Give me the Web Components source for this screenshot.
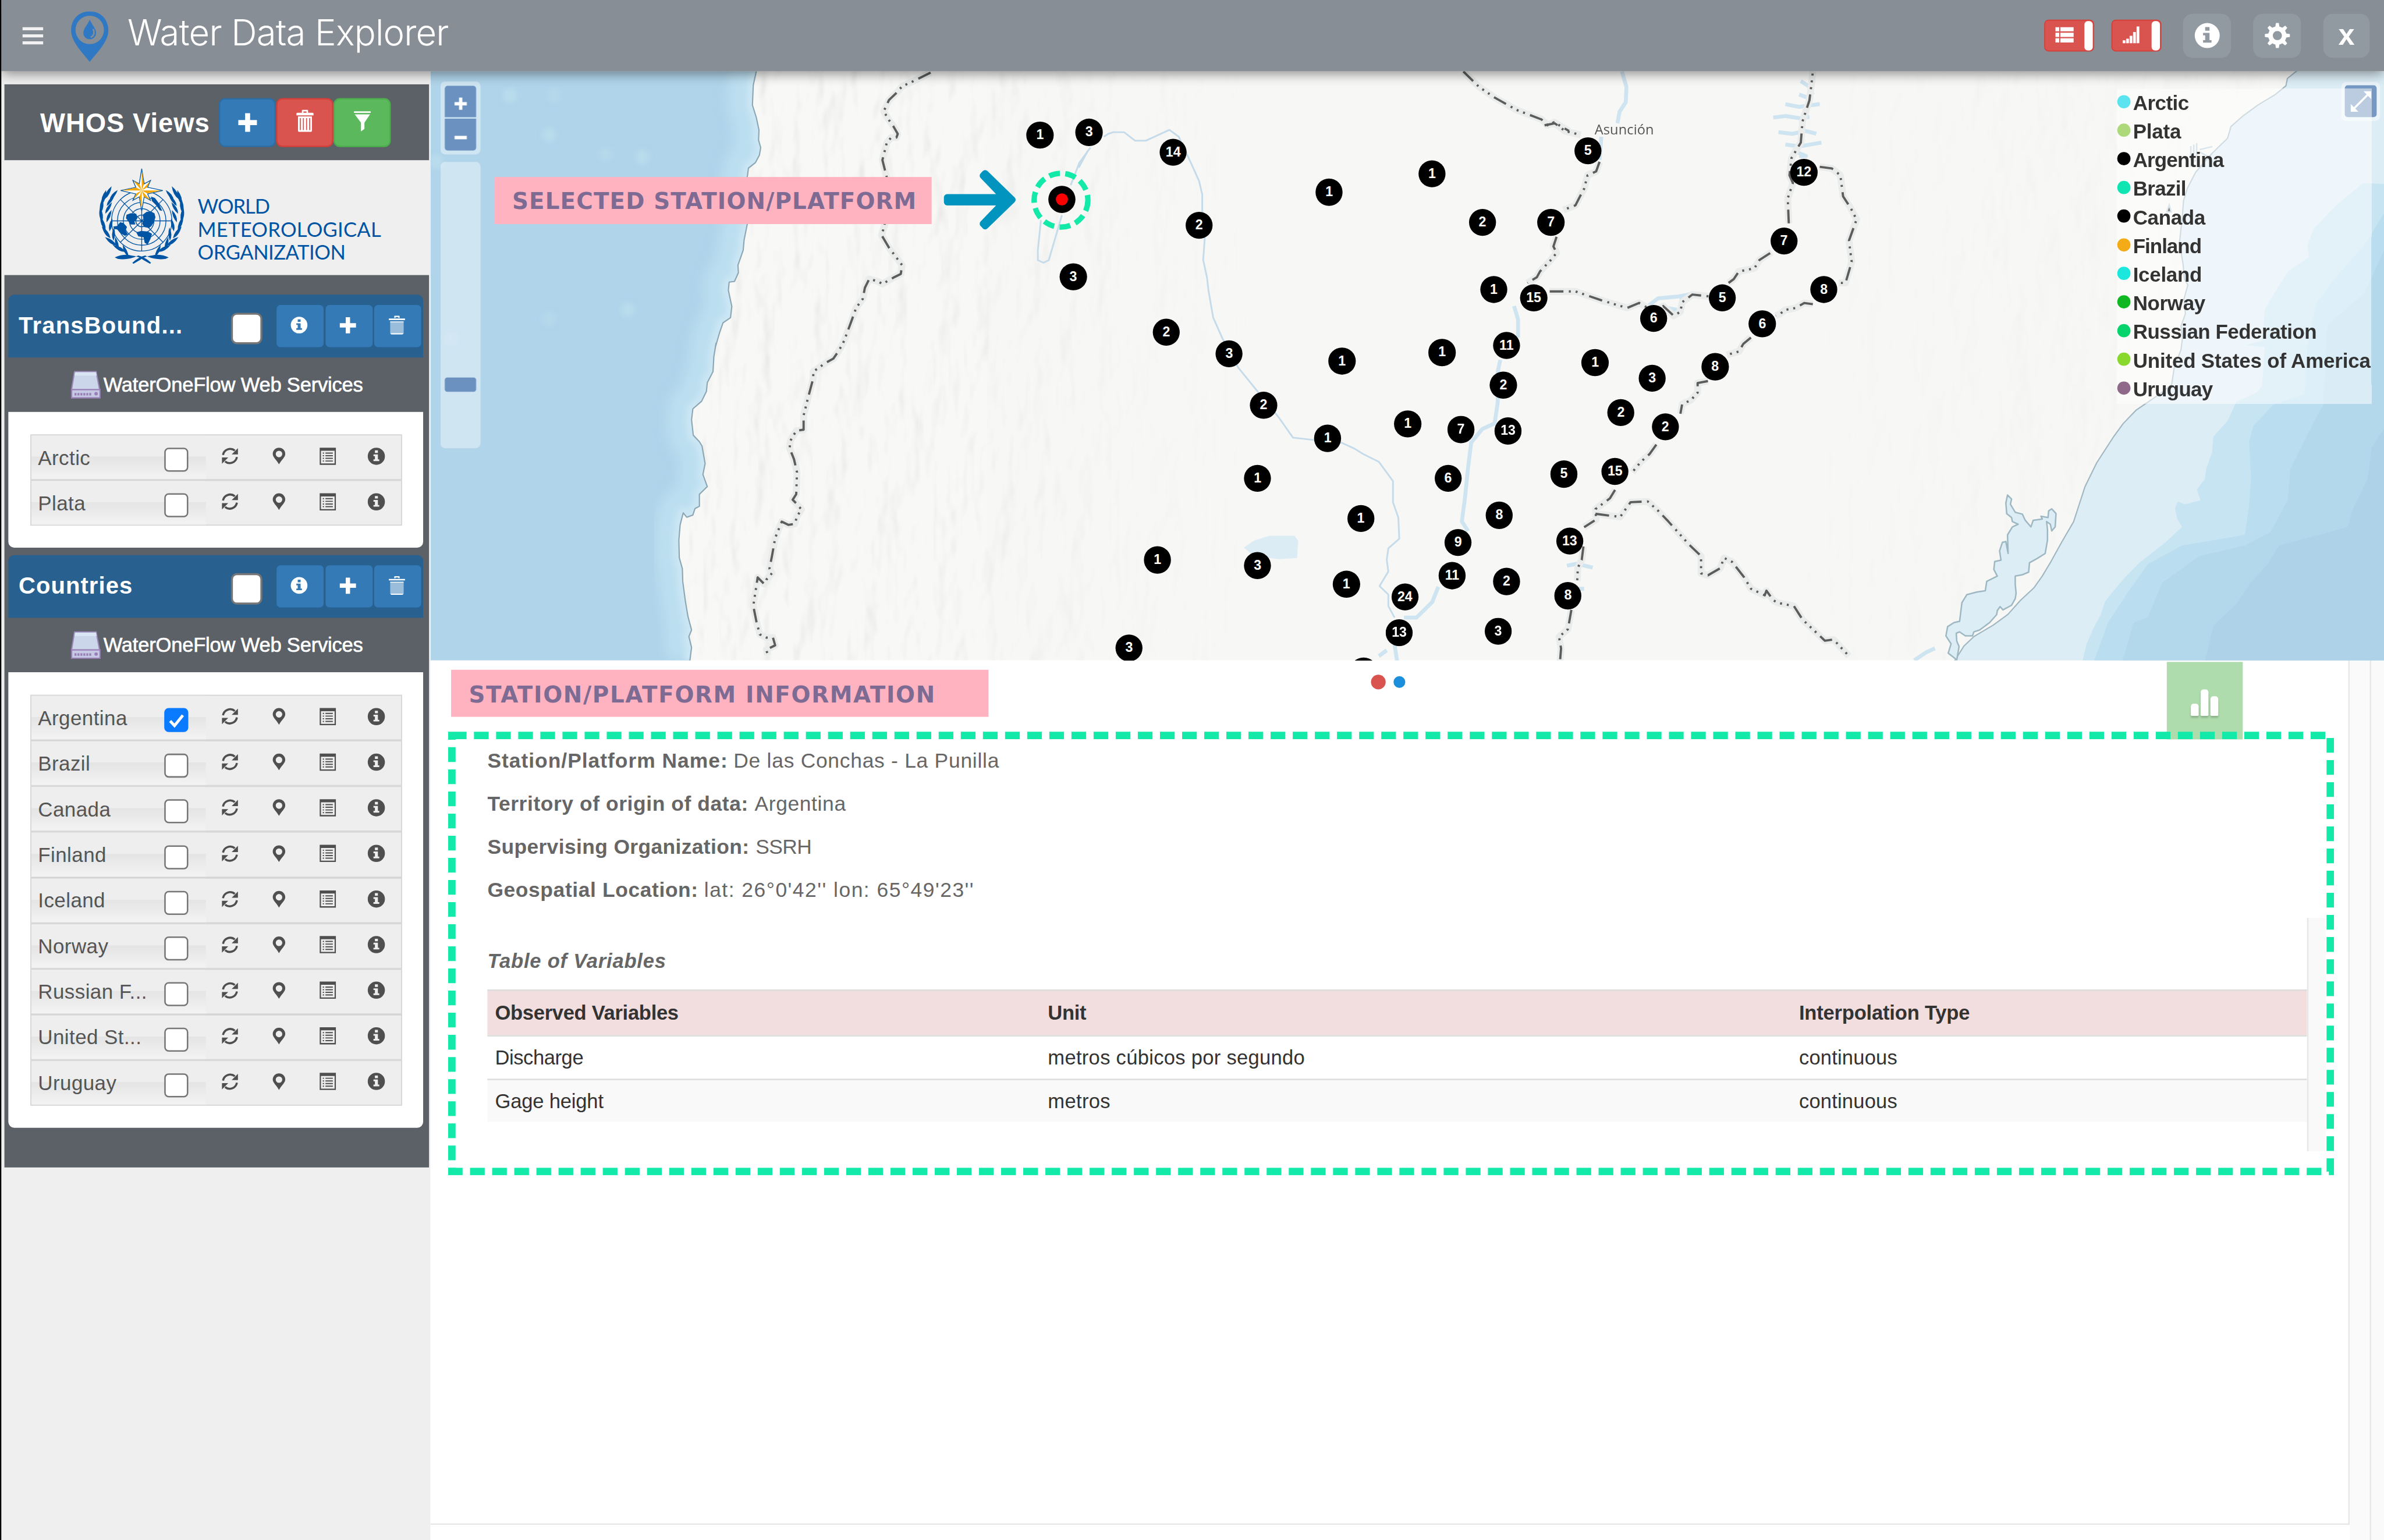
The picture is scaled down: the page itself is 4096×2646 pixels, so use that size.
<!DOCTYPE html>
<html lang="en">
<head>
<meta charset="utf-8">
<title>Water Data Explorer</title>
<style>
html,body{margin:0;padding:0;width:4096px;height:2646px;overflow:hidden;background:#fff}
</style>
</head>
<body>
<water-explorer></water-explorer>
<script>
const define = (name, html, setup) => customElements.define(name, class extends HTMLElement {
  constructor(){ super(); this.attachShadow({mode:'open'}); }
  connectedCallback(){
    if (this.done) return; this.done = true;
    this.shadowRoot.innerHTML = typeof html === 'function' ? html(this) : html;
    if (setup) setup(this);
  }
});

/* Text run whose tracking is adjusted so it spans the width in its w attribute. */
define('fit-text', `<style>:host{display:inline-block;white-space:nowrap;flex:none;width:max-content;justify-self:start}</style><slot></slot>`, el => {
  const w = +el.getAttribute('w'), n = el.textContent.length;
  el.style.letterSpacing = ((w - el.offsetWidth) / (n - 1)).toFixed(3) + 'px';
  el.style.width = w + 'px';
});

const teeth = Array.from({length:8},(_,i)=>`<path d="M9.9 4.5 10.6 0h2.8l.7 4.5z" transform="rotate(${i*45} 12 12)"/>`).join('');
const icons = {
  info:`<path fill-rule="evenodd" d="M12 0a12 12 0 1 1 0 24a12 12 0 0 1 0-24zM10 3.8h4.2v3.6H10zM8 9.4h6.2v7h1.9v2.4H8v-2.4h2v-4.6H8z"/>`,
  plus:`<path d="M8.800 0h6.400v8.800H24v6.400h-8.800V24H8.800v-8.800H0V8.800h8.800z"/>`,
  trash:`<path d="M8 3.2V.8Q8 0 9 0h6q1 0 1 .8v2.4h6q1 0 1 1V6H1V4.200q0-1 1-1zm2 0h4V1.800h-4z" fill-rule="evenodd"/><path d="M3 7.200h18v15q0 1.800-1.800 1.800H4.800Q3 24 3 22.200zM5.300 9v13h1.300V9zM9.300 9v13h1.300V9zM13.400 9v13h1.300V9zM17.400 9v13h1.300V9z" fill-rule="evenodd"/>`,
  bin:`<path d="M8 2.800V.8Q8 0 9 0h6q1 0 1 .8v2.000h-2V1.700h-4v1.100zM0 3.600h24v2H0z"/><path d="M2 8h20v14.200q0 1.800-1.800 1.800H3.800Q2 24 2 22.200z" opacity=".5"/><path d="M2 7.200h20v1.200H2zM2.500 22.500h19l-1.300 1.500H3.800z"/>`,
  filter:`<path d="M0 0h24v2H0zM1 3.600h22l-8 10V21l-5 3V13.600z"/>`,
  refresh:`<path d="M2 10.500A10.500 10.500 0 0 1 19 4.200" fill="none" stroke="currentColor" stroke-width="3"/><path d="M23.500.8v9h-9z"/><path d="M22 13.500A10.500 10.500 0 0 1 5 19.800" fill="none" stroke="currentColor" stroke-width="3"/><path d="M.5 23.200v-9h9z"/>`,
  pin:`<path fill-rule="evenodd" d="M12 0a9 9 0 0 1 9 9c0 4.600-5 8-9 15C8 17 3 13.600 3 9a9 9 0 0 1 9-9zm0 4.400a4.700 4.700 0 1 0 0 9.400a4.700 4.700 0 0 0 0-9.400z"/>`,
  list:`<path fill-rule="evenodd" d="M0 0h24v24H0zM1.900 4.400v17.700h20.200V4.400z"/><path d="M4.500 6.800h2v1.600h-2zM4.500 10.500h2v1.600h-2zM4.500 14.200h2v1.600h-2zM4.500 17.900h2v1.600h-2zM8.500 6.800h11v1.600h-11zM8.500 10.500h11v1.600h-11zM8.500 14.200h11v1.600h-11zM8.500 17.900h11v1.600h-11z"/>`,
  gear:`<circle cx="12" cy="12" r="6.600" fill="none" stroke="currentColor" stroke-width="4.400"/>${teeth}`,
  rows:`<path d="M0 1h5v6H0zM6.500 1H24v6H6.500zM0 9h5v6H0zM6.500 9H24v6H6.500zM0 17h5v6H0zM6.500 17H24v6H6.500z"/>`,
  signal:`<path d="M0 20h4v4H0zM5 17.500h4V24H5zM10 13.500h4V24h-4zM15 8h4v16h-4zM20 0h4v24h-4z"/>`,
  bars:`<path d="M0 3h24v3.800H0zM0 12.200h24V16H0zM0 21.200h24V25H0z" transform="translate(0 -2)"/>`,
  check:`<path d="M5 12.500 10 17.800 19.500 6" fill="none" stroke="currentColor" stroke-width="3.200"/>`,
  expand:`<path d="M5 19 19 5" stroke="currentColor" stroke-width="2" fill="none"/><path d="M22 2v7.500L14.500 2zM2 22v-7.500L9.500 22z"/>`
};
define('ui-icon', el => `<style>:host{display:inline-flex;flex:none;width:${el.getAttribute('w')}px;height:${el.getAttribute('h')||el.getAttribute('w')}px}svg{width:100%;height:100%;fill:currentColor;overflow:visible}</style>
<svg viewBox="0 0 24 24" preserveAspectRatio="none">${icons[el.getAttribute('name')]}</svg>`);

define('check-box', el => { const big = el.hasAttribute('big'), on = el.hasAttribute('checked');
  return `<style>:host{display:block;box-sizing:border-box;flex:none;width:${big?64:49}px;height:${big?64:49}px;border:${big?4:3}px solid ${on?'#0a7aff':'#767676'};border-radius:${big?12:9}px;background:${on?'#0a7aff':'#fff'};color:#fff}</style>${on?'<ui-icon name="check" w="43"></ui-icon>':''}`;});

/* ---------- top bar ---------- */
define('toggle-pill', `<style>:host{display:flex;align-items:center;justify-content:space-between;box-sizing:border-box;width:102px;height:65px;border:2px solid #d43f3a;border-radius:9px;background:#d9534f;color:#fff;padding:0 1px 3px 21px}
i{width:17px;height:60px;margin-top:3px;border-radius:7px;background:#fff}</style><slot></slot><i></i>`);
define('bar-button', `<style>:host{display:flex;align-items:center;justify-content:center;width:98px;height:90px;border-radius:20px;background:#9199a1;color:#fff;font:bold 60px/60px "Liberation Sans",sans-serif}</style><slot></slot>`);
define('top-bar', `<style>
:host{display:flex;align-items:center;height:145px;background:#878e95;color:#fff;padding-left:43px;padding-right:29px;position:relative;z-index:3;box-shadow:0 6px 24px rgba(0,0,0,.45);flex:none}
.menu{color:#f2f2f2}.pin{width:78px;height:103px;margin:3px 0 0 56px}
.title{margin:0 0 11px 38px;font:300 73px/80px "Inter","Liberation Sans",sans-serif}
.sp{flex:1}toggle-pill{margin-right:35px}bar-button{margin-left:45px}
</style>
<ui-icon class="menu" name="bars" w="42" h="38"></ui-icon>
<svg class="pin" viewBox="0 0 78 103"><path fill="#2f78c3" fill-rule="evenodd" d="M39 0C62 0 77 17 77 39C77 62 54 84 39 103C24 84 1 62 1 39C1 17 16 0 39 0zM39 9a29 29 0 1 0 0 58a29 29 0 0 0 0-58z"/><path fill="#2f78c3" d="M39 17c4 10 13 18 13 27a13 13 0 0 1-26 0c0-9 9-17 13-27z"/><path d="M46 36q5 12-5 17" stroke="#878e95" stroke-width="3" fill="none"/></svg>
<fit-text class="title" w="656">Water Data Explorer</fit-text>
<span class="sp"></span>
<toggle-pill><ui-icon name="rows" w="37" h="34"></ui-icon></toggle-pill>
<toggle-pill style="margin-right:-1px"><ui-icon name="signal" w="34" h="34"></ui-icon></toggle-pill>
<bar-button><ui-icon name="info" w="51"></ui-icon></bar-button>
<bar-button><ui-icon name="gear" w="51"></ui-icon></bar-button>
<bar-button style="width:95px"><span style="padding-bottom:4px">x</span></bar-button>`);

/* ---------- sidebar ---------- */
define('color-button', el => `<style>:host{display:flex;align-items:center;justify-content:center;box-sizing:border-box;width:117px;height:100px;border-radius:13px;border:3px solid ${el.getAttribute('line')};background:${el.getAttribute('bg')};color:#fff}</style><slot></slot>`);

const leaves = () => { let s='';
  const L=[[249,506,-68],[232,492,-60],[222,474,-42],[215,456,-28],[211,438,-14],[212,420,0],[216,403,10],[224,394,22]];
  const R=[[262,512,-30],[244,497,-20],[237,478,-2],[231,459,8],[227,441,18],[226,424,26],[230,409,32],[236,398,34]];
  L.forEach(([x,y,a])=>{ s+=`<path d="M0 13Q-8 2 -1-17Q6 0 0 13z" transform="translate(${x-4} ${y}) rotate(${a+8})"/>`; });
  R.forEach(([x,y,a])=>{ s+=`<path d="M0 12Q-6 0 2-15Q6 0 0 12z" transform="translate(${x-6} ${y}) rotate(${a})"/>`; });
  return s+'<path d="M234 524Q252 516 268 520Q284 522 292 529L306 537L308 535Q296 523 282 520Q262 530 240 527z"/>';};
define('wmo-logo', () => `<style>:host{display:flex;height:234px;flex:none;background:#efefef;color:#0054a4}
svg{width:190px;height:204px;margin:12px 0 0 186px;flex:none}
div{display:flex;flex-direction:column;align-items:flex-start;margin:70px 0 0 18px;font:41px/47px "Lato",sans-serif}</style>
<svg viewBox="195 338 190 204"><g fill="#0054a4">${leaves()}<g transform="matrix(-1 0 0 1 578 0)">${leaves()}</g></g>
<g fill="none" stroke="#0054a4" stroke-width="1.600"><circle cx="289" cy="449.500" r="61.500"/><circle cx="289" cy="449.500" r="49.500"/><circle cx="289" cy="449.500" r="37.500"/><circle cx="289" cy="449.500" r="25"/><circle cx="289" cy="449.500" r="12"/>
<path d="M227.500 449.500h123M289 388v123M245.500 406l87 87M332.500 406l-87 87"/></g>
<g fill="#0054a4"><path d="M258 437l8-3 12 1 2 10-6 5 2 7-10 0-6-9-3-4zM231 461l8-1 6-8 7 2 7 8-3 7 5 8-6 3-10-6-6-7-6-1zM291 437l8-6 8-1 8 4 2 8-3 10-5 8-5 4-10-2-4-7 3-7zM278 473l10-3 13 1 9 5-3 10-6 12-6-4-2-11-11-2zM308 400l8 3 6 8 5 10 4 8-5-1-8-11-8-8z"/></g>
<path fill="#fff" stroke="#0054a4" stroke-width="1.600" d="M289 343l5 31 13-7-6 14 31 6.500-31 7 6 13-13-7-5 29-5-29-13 7 6-13-31-7 31-6.500-6-14 13 7z"/>
<path fill="#f7a600" d="M289 344.500v43l4.600-13zM289 387.500l17-19.500-6.500 13.500zM289 387.500h41l-30 6zM289 387.500l17 19-13-6.500zM289 387.500v38l-4.600-25zM289 387.500l-17 19 6.500-13zM289 387.500h-41l30-6zM289 387.500l-17-19.500 12.500 6.500z"/></svg>
<div><fit-text w="148">WORLD</fit-text><fit-text w="374">METEOROLOGICAL</fit-text><fit-text w="302">ORGANIZATION</fit-text></div>`);

define('station-row', el => `<style>:host{display:grid;grid-template-columns:356px 100px 100px 99px 1fr;box-sizing:border-box;height:93.100px;border:2px solid #d4d4d4;background:#eee;color:#4f4f4f}
.n{display:flex;align-items:center;padding:2px 0 0 14px;box-sizing:border-box;background:linear-gradient(#eee 48%,#e4e4e4 49%,#f2f2f2 95%);font:41.500px/60px "Liberation Sans",sans-serif;color:#555}
.n span{flex:none;width:257px;white-space:nowrap;letter-spacing:.5px}check-box{margin-top:8px}
.c{display:flex;align-items:center;justify-content:center;padding-bottom:5px;padding-right:1px}</style>
<div class="n"><span>${el.getAttribute('name')}</span><check-box ${el.hasAttribute('on')?'checked':''}></check-box></div>
<div class="c"><ui-icon name="refresh" w="34"></ui-icon></div><div class="c"><ui-icon name="pin" w="34"></ui-icon></div><div class="c"><ui-icon name="list" w="33" h="35"></ui-icon></div><div class="c"><ui-icon name="info" w="35"></ui-icon></div>`);

define('view-group', el => `<style>:host{display:block;width:846px;flex:none}
header{display:flex;align-items:center;height:128px;background:#28608f;border-radius:12px 12px 0 0;color:#fff;padding-left:21px;box-sizing:border-box}
.t{width:433px;font:bold 47.500px/60px "Liberation Sans",sans-serif;white-space:nowrap;margin-bottom:3px}
check-box{margin:9px 29px 0 0}
.b{display:flex;align-items:center;justify-content:center;width:96px;height:86px;background:#337ab7;border-radius:8px;margin-right:3.500px;padding:0 4px 4px 0;box-sizing:border-box}
.s{display:flex;align-items:center;height:111px;padding-left:127px;color:#fff;font:41px/60px "Liberation Sans",sans-serif;-webkit-text-stroke:.8px #fff}
.s svg{width:62px;height:58px;margin-right:5px}
.l{background:#fff;border-radius:0 0 12px 12px;padding:46px 43.500px 45px 44.500px}
</style><header><div class="t"><fit-text w="${el.getAttribute('w')}">${el.getAttribute('title-text')}</fit-text></div><check-box big></check-box>
<div class="b"><ui-icon name="info" w="34"></ui-icon></div><div class="b"><ui-icon name="plus" w="33"></ui-icon></div><div class="b"><ui-icon name="bin" w="33" h="38"></ui-icon></div></header>
<div class="s"><svg viewBox="0 0 62 58"><path d="M8 2h44l7 36v17H2V38z" fill="#cbd6ea" stroke="#9a86b8" stroke-width="2.500"/><path d="M9 3h43l1 7H8z" fill="#dbe6f4"/><path d="M2 38.500h58v17H2z" fill="#c5c9e4" stroke="#9a7fb5" stroke-width="2.500"/><path d="M8 48h36" stroke="#9a7fb5" stroke-width="5" stroke-dasharray="4 2"/><circle cx="52" cy="47" r="3.500" fill="#9a7fb5"/></svg><fit-text w="529">WaterOneFlow Web Services</fit-text></div>
<div class="l"><slot></slot></div>`);

define('side-bar', `<style>:host{display:flex;flex-direction:column;flex:none;background:#efefef;padding:27px 3px 0 6px;height:2996px;box-sizing:border-box;width:875px}
.h{display:flex;align-items:center;height:155px;background:#5b6167;color:#fff;padding-left:73px;box-sizing:border-box;flex:none}
.h .n{font:bold 54px/70px "Liberation Sans",sans-serif;margin-right:19px}
.g{background:#5b6167;padding:40px 0 81px 8px;display:flex;flex-direction:column;gap:15px}</style>
<div class="h"><fit-text class="n" w="345">WHOS Views</fit-text><color-button bg="#337ab7" line="#2e6da4"><ui-icon name="plus" w="38"></ui-icon></color-button><color-button bg="#d9534f" line="#d43f3a"><ui-icon name="trash" w="38" h="45" style="margin-bottom:6px"></ui-icon></color-button><color-button bg="#5cb85c" line="#4cae4c"><ui-icon name="filter" w="34" h="41" style="margin-bottom:4px"></ui-icon></color-button></div>
<wmo-logo></wmo-logo>
<div class="g">
<view-group title-text="TransBound..." w="334"><station-row name="Arctic"></station-row><station-row name="Plata"></station-row></view-group>
<view-group title-text="Countries" w="232"><station-row name="Argentina" on></station-row><station-row name="Brazil"></station-row><station-row name="Canada"></station-row><station-row name="Finland"></station-row><station-row name="Iceland"></station-row><station-row name="Norway"></station-row><station-row name="Russian F..."></station-row><station-row name="United St..."></station-row><station-row name="Uruguay"></station-row></view-group>
</div>`);

/* ---------- map ---------- */
/* Each survey frame has its own origin and scale; points are projected to page units. */
const frame = (ox,oy,sx,sy) => s => s.trim().split(/\s+/).map(p=>{const [x,y]=p.split(',').map(Number);return (ox+x/sx).toFixed(1)+','+(oy+y/sy).toFixed(1)}).join(' ');
const A=frame(880,0,1.12,1.96), B=frame(880,700,1.12,2.24), C=frame(2200,130,1.568,1.2748), D=frame(3150,130,1.4255,1.2748), E=frame(3950,500,1.7193,1.8447);
const wc = A('742,285 735,340 733,420 742,470 748,520 747,560 752,590 749,620 740,650 724,672 722,700 715,760 722,890 714,960 712,1000 700,1060 701,1090 692,1125 680,1128 678,1160 686,1225 683,1270 666,1290 658,1330 648,1390')+' '+
 B('650,0 645,60 643,130 630,180 628,220 617,265 597,300 594,350 598,420 612,450 618,470 625,550 620,600 630,655 612,690 612,745 602,755 597,785 583,795 575,775 568,830 565,900 566,980 573,1030 574,1090 580,1180 586,1250 594,1310 588,1340 594,1390 590,1452');
const ec = '4690,140 4665,160 4662,175 4640,193 4605,214 4575,236 4550,258 4543,282 4511,313 4478,351 4461,384 4453,410 4451,439 4445,494 4449,520 4452,537 4455,570 4462,581 4454,610 4457,640 4448,665 4451,690 4448,713 4434,751 4429,784 4405,803 4385,817 4357,836 4330,864 4311,890 4276,944 4252,993 4240,1030 4229,1064 4205,1105 4183,1145 4165,1175 4148,1199 4120,1225 4095,1253 4065,1275 4026,1298 4005,1318 3985,1350';
const borders = [
 A('1140,290 1100,325 1075,345 1060,375 1045,400 1033,445 1045,480 1055,505 1065,535 1062,550 1050,550 1040,570 1030,640 1040,710 1035,900 1028,940 1045,990 1060,1025 1075,1060 1072,1095 1055,1110 1030,1135 1020,1125 1000,1115 990,1150 985,1195 970,1230 960,1280 945,1350')+' '+B('940,0 930,35 918,70 900,90 872,130 872,160 860,250 850,330 850,395 833,400 820,445 818,480 828,530 835,590 833,690 825,715 835,735 845,760 835,790 830,825 815,830 800,815 785,890 778,970 772,1030 778,1050 765,1080 760,1100 745,1070 735,1200 742,1270 750,1330 765,1345 780,1345 785,1380 765,1400 768,1425'),
 C('1230,20 1280,60 1330,88 1400,120 1480,145 1500,160 1520,152 1568,175'), D('0,160 30,155 60,175 105,185'),
 D('160,255 150,280 125,290 115,325 100,350 90,368 55,380'), C('1528,450 1518,475 1528,492 1510,510 1475,540 1465,555 1435,570'),
 D('15,592 90,592 165,615 240,635 275,622 320,645 345,630 375,655 395,645 400,620 430,600 480,605'), D('535,570 550,560 565,540 610,532 625,510 660,490'),
 D('710,415 707,350 722,310 712,290 718,245 745,205 750,150 770,95 775,60 780,20'), D('800,268 835,272 860,290 868,345 890,375 907,405 885,460 893,515 875,570 855,570'),
 D('780,625 755,622 730,635 700,640 685,650 672,655'), D('600,712 578,728 565,748 530,757'), D('475,825 445,830 445,855 425,875 400,885 395,910'), D('325,990 305,1015 280,1035 255,1062'),
 D('205,1108 190,1130 160,1150 148,1158 150,1185 115,1205'), D('148,1170 190,1175 220,1178 250,1140 300,1138 330,1162 360,1190 420,1250 455,1280 455,1325 475,1330 510,1312 522,1285 545,1295 580,1335 600,1365 640,1382 645,1370 665,1395 680,1402 725,1410 750,1445 815,1500 840,1497 885,1540'),
 D('113,1255 108,1290 97,1310 95,1345'), D('78,1420 68,1470 42,1490 48,1520 45,1553')];
const rivers = [C('80,190 95,182 110,178 145,178 180,200 215,200 290,172 320,190 360,260 385,305 395,340 395,380 403,455 398,510 410,555 415,590 430,660 460,715 510,790 570,850 640,920 685,972 750,978 840,985 880,1000 910,1015 960,1035 1005,1085 1005,1140 1022,1180 1025,1235 990,1260 985,1290 990,1320 962,1358 990,1380 990,1410 1010,1440'),
 C('30,225 0,270'), A('1505,590 1480,650 1460,740'), A('1440,860 1425,950 1410,1040 1398,1050 1385,1040 1385,1000 1392,880')];
const wide = [C('1392,630 1405,665 1405,712'), C('1348,770 1340,800 1340,880 1330,935 1290,950 1255,985 1245,1050 1235,1130 1225,1190 1245,1215'), C('1150,1360 1130,1400 1080,1440 1040,1440'), C('1010,1510 1018,1553'), C('960,1540 985,1525'),
 D('225,20 238,60 236,100 218,125 212,155'), D('300,630 330,610 390,605 430,598'), D('165,620 240,632'), D('355,635 385,640'), D('400,600 395,640'),
 D('665,140 700,136 745,142 770,138'), D('680,178 720,182 760,175 790,182'), D('700,105 740,112 800,105'), D('700,210 740,215 805,205'), D('720,225 760,240 740,240'), D('745,45 770,60 780,80'), D('740,80 770,90'), D('65,1305 95,1300 140,1310'), D('90,1365 115,1365'), D('1075,1551 1110,1530 1135,1520'), D('165,190 160,250')];
const lagoon = E('248,940 262,955 258,975 275,1005 300,1012 310,1035 330,1060 338,1035 370,1030 365,1020 390,1025 392,1000 403,992 418,1010 415,1060 403,1075 398,1050 385,1040 388,1070 388,1110 380,1160 350,1180 325,1195 322,1230 300,1240 275,1245 275,1275 278,1310 275,1330 262,1355 232,1372 222,1360 212,1375 210,1390 185,1420 150,1448 130,1455 125,1470 100,1470 80,1455 68,1460 70,1490 78,1510 70,1560 40,1535 50,1500 32,1470 38,1435 60,1420 80,1415 88,1345 105,1315 140,1305 170,1300 175,1265 212,1245 200,1220 203,1190 225,1185 220,1150 230,1118 242,1115 250,1160 248,1090 265,1060 285,1050 265,1040 262,1025 245,1010 242,970');
const depth = [['#c6e4f1','1568,-230 1494,-234 1400,-150 1320,-60 1300,0 1305,45 1230,100 1150,240 1140,360 1085,375 1150,385 1140,530 1120,555 1050,590 1020,660 970,720 965,780 945,840 940,880 912,920 925,960 870,975 845,965 835,990 843,1030 860,1060 800,1120 710,1195 660,1250 620,1300 590,1340 575,1390 550,1440 525,1500 510,1568'],
 ['#badef0','1568,-120 1500,0 1400,120 1330,220 1300,380 1290,560 1180,600 1110,680 1095,740 1102,880 1095,980 1080,1090 860,1130 740,1200 680,1290 600,1420 550,1568'],
 ['#b4d8eb','1568,20 1500,180 1370,300 1355,600 1310,690 1240,840 1230,960 1170,1080 1080,1130 920,1170 790,1270 740,1400 690,1420 650,1568'],
 ['#aed3e9','1568,690 1525,760 1510,880 1460,990 1440,1060 1340,1090 1200,1130 1160,1200 1100,1270 1050,1350 970,1430 940,1568']]
 .map(([c,p])=>`<polygon fill="${c}" points="${E(p+' 1568,1568')}"/>`).join('');
const line = (a,attr)=>a.map(p=>`<polyline points="${p}" ${attr}/>`).join('');
const spots=[[1040,195],[1130,195],[1120,275],[1235,315],[1310,320],[920,690],[1280,632],[1120,650],[890,330]].map(([x,y],i)=>`<ellipse cx="${x}" cy="${y}" rx="14" ry="15" fill="#bfe2ee" opacity="${i%2?.35:.6}"/>`).join('');

define('map-canvas', () => `<style>:host{display:block}svg{display:block;width:3984px;height:1202px}polyline{fill:none;stroke-linejoin:round}</style>
<svg viewBox="878 145 3984 1202"><defs>
<filter id="relief" x="0" y="0" width="1" height="1"><feTurbulence type="fractalNoise" baseFrequency=".016 .0075" numOctaves="3" seed="7"/><feDiffuseLighting surfaceScale="16" lighting-color="#fff" diffuseConstant="1.150"><feDistantLight azimuth="200" elevation="58"/></feDiffuseLighting></filter>
<filter id="soft" x="-.3" y="-.3" width="1.600" height="1.600"><feGaussianBlur stdDeviation="12"/></filter>
<filter id="mist" x="-.5" y="-.5" width="2" height="2"><feGaussianBlur stdDeviation="5"/></filter>
<linearGradient id="fade"><stop offset="0" stop-color="#fff"/><stop offset=".25" stop-color="#fff"/><stop offset=".36" stop-color="#555"/><stop offset=".42" stop-color="#000"/><stop offset=".7" stop-color="#000"/><stop offset=".8" stop-color="#444"/><stop offset="1" stop-color="#444"/></linearGradient>
<mask id="m"><rect x="878" y="145" width="3984" height="1202" fill="url(#fade)"/></mask></defs>
<rect x="878" y="145" width="3984" height="1202" fill="#f7f7f5"/>
<g mask="url(#m)"><rect x="878" y="145" width="3984" height="1202" filter="url(#relief)" opacity=".14"/></g>
<clipPath id="w"><polygon points="870,140 ${wc} 870,1350"/></clipPath>
<g clip-path="url(#w)"><rect x="870" y="140" width="700" height="1210" fill="#b0d4ea"/><g filter="url(#mist)">${spots}</g><polyline points="${wc}" stroke="#bcdff0" stroke-width="100" filter="url(#soft)"/><polyline points="${wc}" stroke="#cbe6f4" stroke-width="24" filter="url(#mist)"/></g>
<polyline points="${wc}" stroke="#8ba5b2" stroke-width="2.500"/>
<clipPath id="e"><polygon points="${ec} 4870,1350 4870,140"/></clipPath>
<g clip-path="url(#e)"><rect x="3900" y="140" width="970" height="1210" fill="#dcedf6"/>${depth}</g>
<polyline points="${ec}" stroke="#9fb6c0" stroke-width="2.500"/>
<polygon points="${lagoon}" fill="#dcedf6" stroke="#9db8c2" stroke-width="3" stroke-linejoin="round"/>
<path d="M4468 298v28M4474 295v36M4480 292v26M4486 305l26-6M4486 310l18 10M4466 340l12-14M4424 418l-5 14h9z" stroke="#b7cdd9" stroke-width="3"/>
${line(rivers,'stroke="#c5dbe9" stroke-width="3.500"')}${line(wide,'stroke="#cfe4f1" stroke-width="8"')}
<polygon points="${C('528,1258 560,1240 610,1227 690,1227 702,1240 698,1285 640,1288 560,1280')}" fill="#dcecf5"/>
${line(borders,'stroke="#e9eceb" stroke-width="14"')}
${line(borders,'stroke="#5c5c5c" stroke-width="4.600" stroke-dasharray="28 11 4 10 4 10 4 11"')}
</svg>`);

define('station-pin', el => `<style>:host{position:absolute;left:${el.getAttribute('x')-878-27.700}px;top:${el.getAttribute('y')-145-27.700}px;width:55.400px;height:55.400px;border-radius:50%;background:#000;color:#fff;font:bold 27.500px/53px "Liberation Sans",sans-serif;text-align:center}</style><slot></slot>`);

const pins=[];
const pc=(s,ox,oy,sx,sy)=>s.trim().split(/\s+/).forEach(t=>{const [n,x,y]=t.split(',').map(Number);pins.push([n,ox+x/sx,oy+y/sy])});
pc('1,1390,540 3,1502,529 3,1466,1106',880,0,1.12,1.96);
pc('14,302,230 2,385,420 1,801,334 1,1130,286 2,1291,412 7,1510,412 1,1327,587 15,1455,609 2,280,698 3,481,754 1,842,773 1,1162,751 11,1368,732 2,1358,836 2,591,888 1,1052,936 7,1222,951 13,1373,955 1,796,974 1,572,1078 6,1181,1078 1,902,1182 8,1345,1174 1,252,1290 3,572,1305 9,1213,1245 1,856,1353 11,1194,1331 2,1368,1346 24,1043,1386 13,1025,1479 3,1341,1476 3,161,1519',2200,130,1.568,1.2748);
pc('5,126,226 12,754,282 7,696,461 5,517,609 8,812,587 6,317,662 6,633,676 1,147,777 3,313,818 8,496,788 2,222,907 2,351,944 5,56,1067 15,205,1060 13,73,1241 8,68,1383',3150,130,1.4255,1.2748);

define('map-legend', () => { const rows=[['Arctic','#5be4ef'],['Plata','#add97b'],['Argentina','#000'],['Brazil','#0fe5b2'],['Canada','#000'],['Finland','#f3ab17'],['Iceland','#1be7dd'],['Norway','#0fb822'],['Russian Federation','#05d46d'],['United States of America','#88d82e'],['Uruguay','#8f698a']];
 const w=[115,98,186,109,148,141,141,148,375,485,163];
 return `<style>:host{display:flex;flex-direction:column;box-sizing:border-box;width:519px;height:643px;background:rgba(255,255,255,.5);color:#333;font:bold 41.500px/58.400px "Liberation Sans",sans-serif}
div{display:flex;align-items:center;height:58.400px}i{width:27px;height:27px;border-radius:50%;margin:-6px 5px 0 1px}</style>`+rows.map((r,i)=>`<div><i style="background:${r[1]}"></i><fit-text w="${w[i]}">${r[0]}</fit-text></div>`).join('');});

define('map-view', () => `<style>
:host{display:block;position:relative;width:3984px;height:1202px;overflow:hidden;flex:none}
.o{position:absolute}
.zoom{left:20px;top:21px;padding:8.500px 9px;gap:3.500px;display:flex;flex-direction:column;width:64px;height:132px;background:rgba(255,255,255,.4);border-radius:10px}
.zoom b{flex:1;background:#6a91bf;color:#fff;border-radius:6px 6px 0 0;display:flex;align-items:center;justify-content:center;padding-top:9px}
.zoom b+b{border-radius:0 0 6px 6px}
.zoom i{display:block;width:25px;height:7px;background:#fff;margin-top:3px}
.slide{left:20px;top:184.500px;width:82px;height:584px;border-radius:10px;background:rgba(255,255,255,.4)}
.slide i{display:block;width:64px;height:29px;margin:440px 9px;background:#6a91bf;border-radius:5px}
.full{left:3897px;top:22px;width:79px;height:80px;border-radius:10px;background:rgba(255,255,255,.4);display:flex}
.full i{width:65px;height:65px;margin:7px;border-radius:6px;background:#7698c3;color:#fff;display:flex;align-items:center;justify-content:center}
map-legend{position:absolute;left:3439px;top:36px}
.city{left:2374px;top:95px;font:28px/46px "Open Sans",sans-serif;color:#555}
.tag{left:130.500px;top:216px;width:891px;height:96px;box-sizing:border-box;padding-left:36px;background:#ffb2c0;color:#7e6b93;font:bold 46px/98px "DejaVu Sans",sans-serif}
svg.o{left:1022px;top:175px;width:360px;height:180px}
</style><map-canvas></map-canvas>
${pins.map(p=>`<station-pin x="${p[1].toFixed(1)}" y="${p[2].toFixed(1)}">${p[0]}</station-pin>`).join('')}<station-pin x="2781" y="1369"></station-pin>
<fit-text class="o city" w="121">Asunción</fit-text>
<div class="o zoom"><b><ui-icon name="plus" w="25"></ui-icon></b><b><i></i></b></div>
<div class="o slide"><i></i></div>
<div class="o full"><i><ui-icon name="expand" w="50"></ui-icon></i></div>
<map-legend></map-legend>
<div class="o tag"><fit-text w="824">SELECTED STATION/PLATFORM</fit-text></div>
<svg class="o" viewBox="0 0 1080 540"><path d="M327.500 100.500L494 262L327.500 423.500L314 409L441 277H95V248H441L314 115z" fill="#0094bf" stroke="#0094bf" stroke-width="40" stroke-linejoin="round"/>
<circle cx="797" cy="260" r="83" fill="#000"/><circle cx="797" cy="260" r="37" fill="#f00"/><circle cx="791.500" cy="265" r="164.500" fill="none" stroke="#13e9a8" stroke-width="33" stroke-dasharray="67 33"/></svg>`);

/* ---------- station details ---------- */
define('info-line', el => `<style>:host{display:flex;height:87.700px;align-items:center;font:42px/60px "Liberation Sans",sans-serif;color:#666}b{margin-right:13px}</style>
<b><fit-text w="${el.getAttribute('lw')}">${el.getAttribute('label')}</fit-text></b><fit-text w="${el.getAttribute('vw')}">${el.getAttribute('value')}</fit-text>`);

define('variables-table', () => { const R=[['Observed Variables',375,'Unit',79,'Interpolation Type',348],['Discharge',181,'metros cúbicos por segundo',524,'continuous',200],['Gage height',221,'metros',127,'continuous',200]];
 return `<style>:host{display:block;width:3711px;color:#333;font:41px/60px "Liberation Sans",sans-serif}
.r{display:grid;grid-template-columns:1127.500px 1532px 1fr;align-items:center;height:88.500px;padding-left:15.500px;box-sizing:border-box;border-top:3px solid #ddd}
.r:nth-of-type(1){height:93.500px;background:#f2dede;font-weight:bold}.r:nth-of-type(3){background:#f9f9f9}</style>`+
 R.map(r=>`<div class="r"><fit-text w="${r[1]}">${r[0]}</fit-text><fit-text w="${r[3]}">${r[2]}</fit-text><fit-text w="${r[5]}">${r[4]}</fit-text></div>`).join('');});

define('station-panel', `<style>
:host{display:flex;height:1794px;background:#fff}
.main{width:3911px;border-right:3px solid #e8e8e8;border-bottom:3px solid #e8e8e8;height:1760px;box-sizing:content-box}
.gut{width:41px;border-right:3px solid #e8e8e8;background:#fafafa}
.end{flex:1;background:#fafafa}
.top{display:flex;height:145px;align-items:flex-start}
.tag{margin:19px 0 0 42px;width:1096px;height:96px;box-sizing:border-box;padding-left:36px;background:#ffb2c0;color:#7e6b93;font:bold 46px/102px "DejaVu Sans",sans-serif}
.dots{display:flex;align-items:center;gap:16px;margin:29px 0 0 780px}
.dots i{width:30px;height:30px;border-radius:50%;background:#d9534f}.dots i+i{width:24px;height:24px;background:#1b8fdc}
.go{width:154.500px;height:158px;margin:3px 0 0 1553px;background:#aedcad;display:flex;align-items:flex-end;justify-content:center;gap:4px;padding-bottom:48px;box-sizing:border-box}
.go i{width:16px;background:#fff;border-radius:6px 6px 2px 2px;box-shadow:0 4px 4px rgba(0,0,0,.2)}
.box{position:relative;margin-left:36px;width:3846px;height:905px;box-sizing:border-box;padding:16px 0 0 80px;display:flex;flex-direction:column}
.box>svg{position:absolute;left:0;top:0;width:3846px;height:905px}
.var{display:flex;flex-direction:column;box-sizing:border-box;width:3751px;height:476px;margin-top:13px;position:relative}
.bar{position:absolute;left:3711px;top:0;width:38px;height:476px;background:#f9f9f9;border-left:3px solid #e8e8e8;box-sizing:border-box}
h4{margin:57px 0 27px;font:italic bold 41px/62px "Liberation Sans",sans-serif;color:#666}
</style>
<div class="main"><div class="top"><div class="tag"><fit-text w="951">STATION/PLATFORM INFORMATION</fit-text></div><div class="dots"><i></i><i></i></div><div class="go"><i style="height:25px"></i><i style="height:54px"></i><i style="height:40px"></i></div></div>
<div class="box"><svg viewBox="914 1492 3846 905"><rect x="921.500" y="1500" width="3831" height="889.500" fill="none" stroke="#13e9a8" stroke-width="15.300" stroke-dasharray="30 15.130"/></svg>
<info-line label="Station/Platform Name:" lw="489" value="De las Conchas - La Punilla" vw="541"></info-line>
<info-line label="Territory of origin of data:" lw="532" value="Argentina" vw="186"></info-line>
<info-line label="Supervising Organization:" lw="534" value="SSRH" vw="115"></info-line>
<info-line label="Geospatial Location:" lw="429" value="lat: 26°0'42'' lon: 65°49'23''" vw="549"></info-line>
<div class="var"><div class="bar"></div><h4><fit-text w="364">Table of Variables</fit-text></h4><variables-table></variables-table></div></div></div>
<div class="gut"></div><div class="end"></div>`);

define('water-explorer', `<style>:host{display:block;width:4096px;height:2646px;overflow:hidden}
.page{width:4862px;height:3141px;box-sizing:border-box;border-left:3px solid #000;transform:scale(.842452);transform-origin:0 0;display:flex;flex-direction:column;background:#fff}
.body{display:flex;height:2996px}.right{width:3984px;display:flex;flex-direction:column}</style>
<div class="page"><top-bar></top-bar><div class="body"><side-bar></side-bar><div class="right"><map-view></map-view><station-panel></station-panel></div></div></div>`);
</script>
</body>
</html>
